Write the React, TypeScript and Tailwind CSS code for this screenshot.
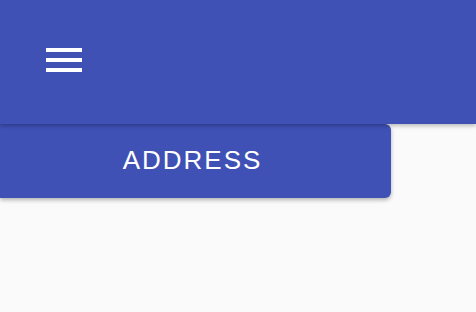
import React from 'react';

export default function App() {
    return (
        <div className="h-[312px] w-[476px] overflow-hidden bg-[#fafafa] font-['Liberation_Sans',Arial,sans-serif]">
            <header className="relative z-10 flex h-[124px] items-start bg-[#3f51b5] pl-[46px] pt-[48px] shadow-[0_2px_4px_rgba(0,0,0,0.25)]">
                <button aria-label="Menu" className="flex w-[36px] flex-col gap-[6px]">
                    <span className="block h-[4px] w-full bg-white" />
                    <span className="block h-[4px] w-full bg-white" />
                    <span className="block h-[4px] w-full bg-white" />
                </button>
            </header>
            <button className="flex h-[74px] w-[391px] items-center justify-center rounded-r-[6px] bg-[#3f51b5] pb-[2px] pr-[6px] text-[26px] tracking-[2px] text-white shadow-[0_2px_4px_rgba(0,0,0,0.3)]">
                ADDRESS
            </button>
        </div>
    );
}
